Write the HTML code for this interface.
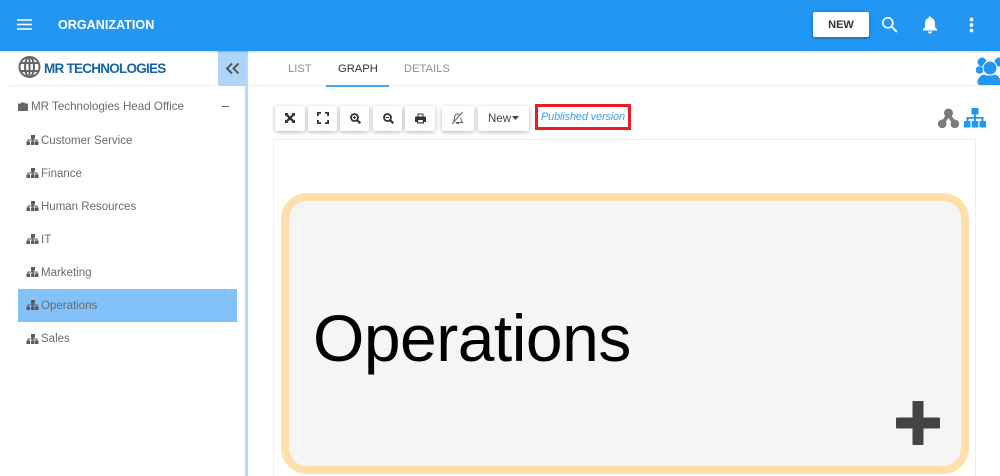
<!DOCTYPE html>
<html><head><meta charset="utf-8">
<style>
html,body{margin:0;padding:0;background:#fff}
#r{position:relative;width:1000px;height:476px;overflow:hidden;background:#fff;font-family:"Liberation Sans",sans-serif}
#r div,#r svg{position:absolute}
.t{white-space:nowrap;line-height:16px}
.side{font-size:11.500px;color:#6b6b6b;left:41px}
.tab{font-size:11.200px;top:61px;color:#8f8f8f}
.b{top:106px;height:25px;background:#fff;border-radius:2px;box-shadow:0 1px 4px rgba(0,0,0,.3)}
</style></head><body>
<div id="r">
<div style="left:0;top:0;width:1000px;height:51px;background:#2196f3;box-shadow:0 1px 2px rgba(0,0,0,.2);z-index:3"></div>
<svg style="left:17px;top:19px;z-index:4" width="15" height="11"><path d="M0 1h15M0 5.500h15M0 10h15" stroke="#fff" stroke-width="1.400"/></svg>
<div class="t" style="left:58px;top:17px;font-size:12.600px;font-weight:bold;color:#fff;z-index:4">ORGANIZATION</div>
<div class="t" style="left:813px;top:12px;width:56px;height:25px;line-height:26px;background:#fff;border-radius:2px;box-shadow:0 1px 3px rgba(0,0,0,.35);text-align:center;font-size:11px;font-weight:bold;color:#333;z-index:4">NEW</div>
<svg style="left:881px;top:16px;z-index:4" width="17" height="17" viewBox="0 0 17 17"><circle cx="6.800" cy="6.800" r="5" fill="none" stroke="#fff" stroke-width="1.600"/><path d="M10.500 10.500l5.500 5.500" stroke="#fff" stroke-width="1.800"/></svg>
<svg style="left:922px;top:16px;z-index:4" width="16" height="18" viewBox="0 0 16 18"><path d="M8 .5c1 0 1.500.7 1.500 1.500C12 2.800 13 5 13 7.500V11l2 2.500v1H1v-1L3 11V7.500C3 5 4 2.800 6.500 2 6.500 1.200 7 .5 8 .5zM6 15.500h4c0 1.200-.9 2-2 2s-2-.8-2-2z" fill="#fff"/></svg>
<svg style="left:969px;top:17px;z-index:4" width="5" height="16"><circle cx="2.500" cy="2.500" r="1.900" fill="#fff"/><circle cx="2.500" cy="8" r="1.900" fill="#fff"/><circle cx="2.500" cy="13.500" r="1.900" fill="#fff"/></svg>

<div style="left:245px;top:51px;width:3px;height:425px;background:#b5dafb"></div>
<div style="left:218px;top:51px;width:29px;height:35px;background:#aed6fb"></div>
<svg style="left:225px;top:62px" width="15" height="13" viewBox="0 0 15 13"><path d="M7 1.500L2 6.500l5 5M13.500 1.500l-5 5 5 5" fill="none" stroke="#555" stroke-width="2"/></svg>
<svg style="left:18px;top:55px" width="23" height="24" viewBox="0 0 23 24"><g fill="none" stroke="#666" stroke-width="2"><circle cx="11.500" cy="12" r="10"/><ellipse cx="11.500" cy="12" rx="4.500" ry="10"/><path d="M11.500 2v20M2.500 8h18M2.500 16h18"/></g></svg>
<div class="t" style="left:44px;top:61px;font-size:13.500px;font-weight:bold;color:#1565a8;letter-spacing:-.75px">MR TECHNOLOGIES</div>
<div style="left:10px;top:85px;width:206px;height:1px;background:#eee"></div>

<svg style="left:18px;top:102px" width="10" height="9" viewBox="0 0 10 9"><path d="M3 1.500V.5h4v1h3V9H0V1.500z" fill="#666"/></svg>
<div class="t side" style="left:31px;top:99px;font-size:11.600px">MR Technologies Head Office</div>
<div style="left:222px;top:106px;width:7px;height:1px;background:#666"></div>

<div style="left:18px;top:289px;width:219px;height:33px;background:#82c1f9"></div>
<svg style="left:0;top:0" width="40" height="350" viewBox="0 0 40 350"><defs><path id="o" d="M30 0h4v3.500h-1.400v1h3.900v2h1v3.500h-3.500V6.500h1.500v-1H32.600v1H33.500v3.500h-3.500V6.500h1.400v-1H27.500v1h1.500v3.500h-3.500V6.500h1v-2h3.900v-1H30z" fill="#5a5a5a"/></defs>
<use href="#o" x="1" y="135"/><use href="#o" x="1" y="168"/><use href="#o" x="1" y="201"/><use href="#o" x="1" y="234"/><use href="#o" x="1" y="267"/><use href="#o" x="1" y="300"/><use href="#o" x="1" y="334"/></svg>
<div class="t side" style="top:132.500px">Customer Service</div>
<div class="t side" style="top:165.500px">Finance</div>
<div class="t side" style="top:198.500px">Human Resources</div>
<div class="t side" style="top:231.500px">IT</div>
<div class="t side" style="top:264.500px">Marketing</div>
<div class="t side" style="top:297.500px">Operations</div>
<div class="t side" style="top:331px">Sales</div>

<div style="left:248px;top:85px;width:752px;height:1px;background:#eee"></div>
<div class="t tab" style="left:288px">LIST</div>
<div class="t tab" style="left:338px;color:#333">GRAPH</div>
<div class="t tab" style="left:404px">DETAILS</div>
<div style="left:326px;top:85px;width:63px;height:1.500px;background:#42a5f5"></div>

<svg style="left:976px;top:56px" width="24" height="30" viewBox="0 0 24 30"><g fill="#2196f3"><circle cx="6" cy="6" r="4.500"/><circle cx="23" cy="6" r="4.500"/><circle cx="3.500" cy="14" r="3.800"/><circle cx="14" cy="12" r="7" stroke="#fff" stroke-width="1"/><path d="M4 29c-1.500 0-2.500-1-2.500-2.500 0-4 3-7.500 6.500-8 3.500 1.500 7 1.500 10.500 0 3 .5 6 3 6 8V29z"/></g></svg>
<svg style="left:938px;top:108px" width="21" height="21" viewBox="0 0 21 21"><g fill="#7b7b7b"><circle cx="10.500" cy="5" r="4.500"/><circle cx="4.200" cy="15.800" r="4.300"/><circle cx="16.800" cy="15.800" r="4.300"/><path d="M8.500 6L2.500 15l3 2 5-7 5 7 3-2-6-9z"/></g></svg>
<svg style="left:964px;top:108px" width="22" height="20" viewBox="0 0 22 20"><g fill="#2196f3"><rect x="7.500" y="0" width="7" height="6.500" rx=".6"/><rect x="0" y="13" width="6.500" height="6.500" rx=".6"/><rect x="7.750" y="13" width="6.500" height="6.500" rx=".6"/><rect x="15.500" y="13" width="6.500" height="6.500" rx=".6"/><path d="M10 6h2v3h7.500v4h-2v-2.200H12V13h-2v-2.200H4.500V13h-2V9H10z"/></g></svg>

<div class="b" style="left:275px;width:30px"></div>
<div class="b" style="left:308px;width:29px"></div>
<div class="b" style="left:340px;width:29px"></div>
<div class="b" style="left:373px;width:29px"></div>
<div class="b" style="left:405px;width:30px"></div>
<div class="b" style="left:442px;width:32px"></div>
<div class="b t" style="left:478px;width:51px;font-size:11.500px;color:#444;line-height:26px;text-indent:10px">New</div>
<svg style="left:512px;top:116px" width="7" height="4"><path d="M0 0h7L3.500 4z" fill="#444"/></svg>

<svg style="left:285px;top:113px" width="10" height="10" viewBox="0 0 10 10"><path d="M0 0h3.500L2.500 1 4 2.500 5 3.500 6 2.500 7.500 1 6.500 0H10v3.500L9 2.500 6.700 5 9 7.500 10 6.500V10H6.500L7.500 9 5 6.700 2.500 9 3.500 10H0V6.500L1 7.500 3.300 5 1 2.500 0 3.500z" fill="#333"/></svg>
<svg style="left:317px;top:112px" width="12" height="12" viewBox="0 0 12 12"><path d="M.9 4V.9H4M8 .9h3.100V4M11.100 8v3.100H8M4 11.100H.9V8" fill="none" stroke="#333" stroke-width="1.800"/></svg>
<svg style="left:350px;top:113px" width="11" height="11" viewBox="0 0 11 11"><circle cx="4.500" cy="4.500" r="3.500" fill="none" stroke="#333" stroke-width="1.800"/><path d="M7 7l3.300 3.300" stroke="#333" stroke-width="2.200"/><path d="M2.800 4.500h3.400M4.500 2.800v3.400" stroke="#333"/></svg>
<svg style="left:383px;top:113px" width="11" height="11" viewBox="0 0 11 11"><circle cx="4.500" cy="4.500" r="3.500" fill="none" stroke="#333" stroke-width="1.800"/><path d="M7 7l3.300 3.300" stroke="#333" stroke-width="2.200"/><path d="M2.800 4.500h3.400" stroke="#333"/></svg>
<svg style="left:415px;top:113px" width="11" height="11" viewBox="0 0 11 11"><path d="M2.500 3.500V.5h6v3h1.500c.6 0 1 .4 1 1V9H9v1.500H2V9H0V4.500c0-.6.4-1 1-1zM3.500 1.500v2h4v-2zM3.200 7v2.400h4.600V7z" fill="#333" fill-rule="evenodd"/></svg>
<svg style="left:451px;top:111px" width="13" height="14" viewBox="0 0 13 14"><path d="M2 11.500c1-1 1.500-2.500 1.500-5 0-2 1.300-3.500 3-3.500 1 0 2 .5 2.500 1.300M9.800 6.500c.1 2.300.7 4 1.700 5H4.500M5.500 12.500h2.500M1 13L11.500 1" fill="none" stroke="#666" stroke-width="1"/></svg>

<div style="left:535px;top:104px;width:96px;height:26px;box-sizing:border-box;border:3px solid #ed1c24;background:#fff"></div>
<div class="t" style="left:541px;top:109px;font-size:11px;font-style:italic;color:#3f9ff0;letter-spacing:-.17px">Published version</div>

<div style="left:273px;top:139px;width:703px;height:340px;box-sizing:border-box;border:1px solid #eee"></div>
<div style="left:281px;top:193px;width:688px;height:281px;box-sizing:border-box;border:8px solid #ffe0ac;border-radius:26px;background:#f5f5f5"></div>
<div class="t" style="left:313px;top:296px;font-size:66px;line-height:84px;color:#000;letter-spacing:-.5px">Operations</div>
<svg style="left:896px;top:401px" width="44" height="44" viewBox="0 0 44 44"><path d="M17.500 0h9c.6 0 1 .4 1 1v15.500H43c.6 0 1 .4 1 1v9c0 .6-.4 1-1 1H27.500V43c0 .6-.4 1-1 1h-9c-.6 0-1-.4-1-1V27.500H1c-.6 0-1-.4-1-1v-9c0-.6.4-1 1-1h15.500V1c0-.6.4-1 1-1z" fill="#444"/></svg>
</div>
</body></html>
